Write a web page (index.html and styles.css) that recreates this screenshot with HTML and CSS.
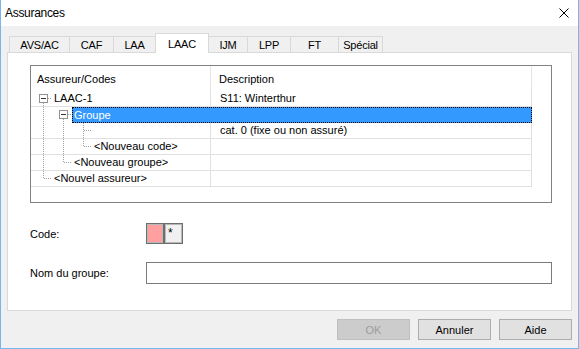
FILE: index.html
```html
<!DOCTYPE html>
<html lang="fr">
<head>
    <meta charset="UTF-8">
    <title>Assurances</title>
    <link rel="stylesheet" href="styles.css">
</head>
<body>
<div class="window">
    <div class="titlebar">
        <span class="title">Assurances</span>
        <svg class="close" width="10" height="10" viewBox="0 0 10 10"><path d="M0.5 0.5L9.5 9.5M9.5 0.5L0.5 9.5" stroke="#000" stroke-width="1" fill="none"/></svg>
    </div>

    <div class="client">
        <div class="tabs">
            <div class="tab" style="width:61px">AVS/AC</div>
            <div class="tab" style="width:45px">CAF</div>
            <div class="tab" style="width:43px">LAA</div>
            <div class="tab active" style="width:54px">LAAC</div>
            <div class="tab" style="width:40px">IJM</div>
            <div class="tab" style="width:44px">LPP</div>
            <div class="tab" style="width:49px">FT</div>
            <div class="tab" style="width:45px">Spécial</div>
        </div>

        <div class="panel">
            <div class="listview">
                <div class="lv-header">
                    <div class="hcell c1">Assureur/Codes</div>
                    <div class="hcell c2">Description</div>
                </div>

                <!-- LAAC-1 -->
                <div class="row">
                    <div class="cell1">
                        <svg class="guides" width="21" height="16" viewBox="31 0 21 16">
                            <path class="dots" d="M48 7.5H52M43.5 12V16"/>
                            <rect class="box" x="39.5" y="3.5" width="8" height="8"/>
                            <path class="minus" d="M41 7.5H46"/>
                        </svg>
                        <span class="label">LAAC-1</span>
                    </div>
                    <div class="cell2">S11: Winterthur</div>
                </div>

                <!-- Groupe (selected) -->
                <div class="row sel">
                    <svg class="guides" width="41" height="16" viewBox="31 0 41 16">
                        <path class="dots" d="M43.5 0V16M68 7.5H72M63.5 12V16"/>
                        <rect class="box" x="59.5" y="3.5" width="8" height="8"/>
                        <path class="minus" d="M61 7.5H66"/>
                    </svg>
                    <span class="selbar">Groupe</span>
                </div>

                <div class="row">
                    <div class="cell1">
                        <svg class="guides" width="61" height="16" viewBox="31 0 61 16">
                            <path class="dots" d="M43.5 0V16M63.5 0V16M83.5 0V16M84 7.5H92"/>
                        </svg>
                    </div>
                    <div class="cell2">cat. 0 (fixe ou non assuré)</div>
                </div>

                <div class="row">
                    <div class="cell1">
                        <svg class="guides" width="61" height="16" viewBox="31 0 61 16">
                            <path class="dots" d="M43.5 0V16M63.5 0V16M83.5 0V8M84 7.5H92"/>
                        </svg>
                        <span class="label">&lt;Nouveau code&gt;</span>
                    </div>
                    <div class="cell2"></div>
                </div>

                <div class="row">
                    <div class="cell1">
                        <svg class="guides" width="41" height="16" viewBox="31 0 41 16">
                            <path class="dots" d="M43.5 0V16M63.5 0V8M64 7.5H72"/>
                        </svg>
                        <span class="label">&lt;Nouveau groupe&gt;</span>
                    </div>
                    <div class="cell2"></div>
                </div>

                <div class="row">
                    <div class="cell1">
                        <svg class="guides" width="21" height="16" viewBox="31 0 21 16">
                            <path class="dots" d="M43.5 0V8M44 7.5H52"/>
                        </svg>
                        <span class="label">&lt;Nouvel assureur&gt;</span>
                    </div>
                    <div class="cell2"></div>
                </div>
            </div>

            <div class="field code-field">
                <span class="field-label">Code:</span>
                <span class="swatch"></span>
                <span class="star">*</span>
            </div>

            <div class="field name-field">
                <span class="field-label">Nom du groupe:</span>
                <span class="textbox"></span>
            </div>
        </div>

        <div class="buttons">
            <div class="btn disabled">OK</div>
            <div class="btn">Annuler</div>
            <div class="btn">Aide</div>
        </div>
    </div>
</div>
</body>
</html>
```

FILE: styles.css
```css
* {
    box-sizing: border-box;
}

body {
    margin: 0;
    font-family: "Liberation Sans", Arial, sans-serif;
    font-size: 11px;
    color: #000;
    background: #fff;
}

.window {
    width: 579px;
    height: 349px;
    border: 1px solid #76b5ee;
    border-top: 0;
    display: flex;
    flex-direction: column;
}

.titlebar {
    flex: none;
    height: 26px;
    background: #fff;
    display: flex;
    align-items: center;
    padding-left: 4px;
}

.title {
    font-size: 12px;
    letter-spacing: -0.3px;
}

.close {
    margin-left: auto;
    margin-right: 9px;
}

.client {
    flex: 1;
    background: #f0f0f0;
    padding: 7px 6px 0 6px;
}

/* tab strip */
.tabs {
    display: flex;
    align-items: flex-end;
    height: 20px;
    padding-left: 2px;
    margin-bottom: -1px;
    position: relative;
    z-index: 1;
}

.tab {
    height: 16px;
    margin-bottom: 1px;
    margin-left: -1px;
    border: 1px solid #d9d9d9;
    border-bottom: 0;
    background: #f0f0f0;
    display: flex;
    align-items: center;
    justify-content: center;
    letter-spacing: -0.2px;
}

.tab:first-child {
    margin-left: 0;
}

.tab.active {
    height: 20px;
    margin-bottom: 0;
    background: #fff;
    position: relative;
    z-index: 1;
}

.panel {
    height: 259px;
    border: 1px solid #d9d9d9;
    background: #fff;
    padding: 12px 0 0 22px;
}

/* list view */
.listview {
    width: 522px;
    height: 138px;
    border: 1px solid #828282;
    background: #fff;
}

.lv-header {
    display: flex;
    height: 25px;
}

.hcell {
    display: flex;
    align-items: center;
    border-right: 1px solid #e5e5e5;
}

.hcell.c1 {
    width: 180px;
    padding-left: 6px;
}

.hcell.c2 {
    width: 321px;
    padding-left: 8px;
}

.row {
    display: flex;
    align-items: flex-start;
    width: 501px;
    height: 16px;
    border-bottom: 1px solid #e0e0e0;
}

.row.sel {
    border-bottom: 0;
}

.cell1 {
    display: flex;
    width: 180px;
    height: 15px;
    border-right: 1px solid #e0e0e0;
    white-space: nowrap;
}

.cell2 {
    flex: 1;
    height: 15px;
    line-height: 15px;
    padding-left: 9px;
    border-right: 1px solid #e0e0e0;
    white-space: nowrap;
}

.guides {
    display: block;
    flex: none;
    shape-rendering: crispEdges;
}

.guides .dots {
    stroke: #a0a0a0;
    stroke-dasharray: 1 1;
    fill: none;
}

.guides .box {
    fill: #fff;
    stroke: #919191;
}

.guides .minus {
    stroke: #333;
}

.label {
    padding: 0 2px;
    line-height: 15px;
}

.selbar {
    flex: 1;
    height: 16px;
    line-height: 14px;
    padding-left: 1px;
    background: #3399ff;
    color: #fff;
    border: 1px dotted #000;
}

/* form fields */
.field {
    display: flex;
    align-items: center;
}

.field-label {
    width: 116px;
}

.code-field {
    margin-top: 20px;
    height: 21px;
}

.swatch {
    width: 18px;
    height: 21px;
    border: 1px solid #6e6e6e;
    box-shadow: inset 0 0 0 1px #b8b8b8;
    background: #ff9f9f;
}

.star {
    width: 19px;
    height: 21px;
    border: 1px solid #6e6e6e;
    box-shadow: inset 0 0 0 1px #b8b8b8;
    background: #f0f0f0;
    font-size: 12px;
    line-height: 12px;
    padding: 3px 0 0 3px;
}

.name-field {
    margin-top: 18px;
    height: 22px;
}

.textbox {
    width: 406px;
    height: 22px;
    border: 1px solid #7a7a7a;
    background: #fff;
}

/* dialog buttons */
.buttons {
    display: flex;
    justify-content: flex-end;
    gap: 8px;
    margin-top: 8px;
}

.btn {
    width: 73px;
    height: 21px;
    border: 1px solid #adadad;
    background: #e1e1e1;
    display: flex;
    align-items: center;
    justify-content: center;
}

.btn.disabled {
    background: #cccccc;
    border-color: #bfbfbf;
    color: #9d9d9d;
}
```
